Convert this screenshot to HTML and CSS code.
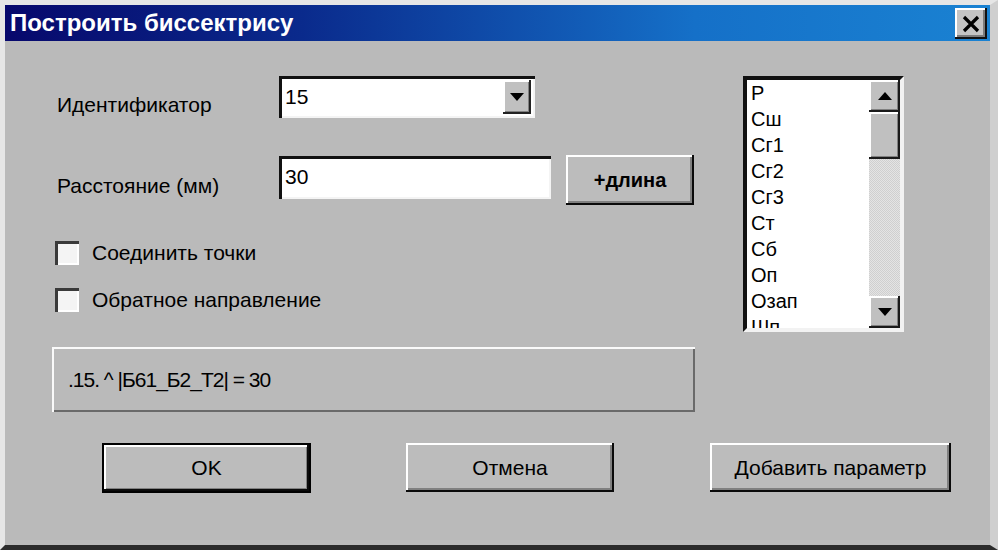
FILE: index.html
```html
<!DOCTYPE html>
<html lang="ru">
<head>
  <meta charset="UTF-8">
  <title>Построить биссектрису</title>
  <link rel="stylesheet" href="styles.css">
</head>
<body>

  <div class="window">
    <div class="titlebar">
      <span class="title">Построить биссектрису</span>
      <div class="close">
        <svg width="20" height="18" viewBox="0 0 20 18"><path d="M3 2 L17 16 M17 2 L3 16" stroke="#000" stroke-width="3.2"/></svg>
      </div>
    </div>

    <div class="client">
      <div class="top">
        <div class="form">
          <div class="row row-id">
            <span class="lbl">Идентификатор</span>
            <div class="combo">
              <span class="combo-text">15</span>
              <div class="drop">
                <svg width="14" height="8" viewBox="0 0 14 8"><path d="M0 0 H14 L7 8 Z" fill="#000"/></svg>
              </div>
            </div>
          </div>

          <div class="row row-dist">
            <span class="lbl">Расстояние (мм)</span>
            <div class="field">30</div>
            <div class="btn btn-len">+длина</div>
          </div>

          <div class="check check-first"><span class="box"></span>Соединить точки</div>
          <div class="check"><span class="box"></span>Обратное направление</div>

          <div class="status">.15. ^ |Б61_Б2_Т2| = 30</div>
        </div>

        <div class="listbox">
          <ul class="items">
            <li>Р</li>
            <li>Сш</li>
            <li>Сг1</li>
            <li>Сг2</li>
            <li>Сг3</li>
            <li>Ст</li>
            <li>Сб</li>
            <li>Оп</li>
            <li>Озап</li>
            <li>Шп</li>
          </ul>
          <div class="scroll">
            <div class="sb-btn">
              <svg width="14" height="8" viewBox="0 0 14 8"><path d="M0 8 H14 L7 0 Z" fill="#000"/></svg>
            </div>
            <div class="thumb"></div>
            <div class="track"></div>
            <div class="sb-btn">
              <svg width="14" height="8" viewBox="0 0 14 8"><path d="M0 0 H14 L7 8 Z" fill="#000"/></svg>
            </div>
          </div>
        </div>
      </div>

      <div class="buttons">
        <div class="btn btn-ok">OK</div>
        <div class="btn btn-cancel">Отмена</div>
        <div class="btn btn-add">Добавить параметр</div>
      </div>
    </div>
  </div>

</body>
</html>
```

FILE: styles.css
```css
body {
  margin: 0;
  padding: 0;
  background: #bababa;
  font-family: "Liberation Sans", Arial, sans-serif;
  color: #000;
}

.window {
  width: 998px;
  height: 550px;
  box-sizing: border-box;
  border-top: 5px solid #e6e6e6;
  border-left: 5px solid #e6e6e6;
  border-right: 8px solid #cfcfcf;
  border-bottom: 5px solid #2b2b2b;
  background: #bababa;
  display: flex;
  flex-direction: column;
}

.titlebar {
  height: 36px;
  display: flex;
  align-items: flex-start;
  justify-content: space-between;
  background: linear-gradient(to right, #07086c, #0a2a8c 30%, #1570c8 70%, #1a82d2);
}

.title {
  color: #fff;
  font-weight: bold;
  font-size: 24px;
  line-height: 36px;
  padding-left: 5px;
}

.close {
  width: 32px;
  height: 31px;
  margin: 3px 3px 0 0;
  box-sizing: border-box;
  background: #c4c4c4;
  box-shadow: inset -2px -2px #111, inset 2px 2px #fff, inset -4px -4px #7c7c7c;
  display: flex;
  align-items: center;
  justify-content: center;
}

.client {
  flex: 1;
  padding: 35px 0 0 47px;
  font-size: 21px;
}

.top {
  display: flex;
  gap: 48px;
}

.form {
  width: 643px;
}

.row {
  display: flex;
  align-items: flex-start;
}

.lbl {
  width: 222px;
  padding-left: 5px;
  line-height: 24px;
}

.row-id .lbl {
  padding-top: 17px;
}

.combo {
  width: 256px;
  height: 42px;
  box-sizing: border-box;
  background: #fff;
  box-shadow: inset 3px 3px #111, inset -2px -2px #f4f4f4;
  display: flex;
  align-items: center;
  justify-content: space-between;
  padding: 4px 4px 4px 6px;
}

.combo-text {
  line-height: 34px;
}

.drop {
  width: 28px;
  height: 34px;
  box-sizing: border-box;
  background: #c0c0c0;
  box-shadow: inset -2px -2px #222, inset 2px 2px #fff, inset -3px -3px #808080;
  display: flex;
  align-items: center;
  justify-content: center;
}

.row-dist {
  margin-top: 37px;
}

.row-dist .lbl {
  padding-top: 19px;
}

.field {
  width: 272px;
  height: 43px;
  margin-top: 1px;
  box-sizing: border-box;
  background: #fff;
  box-shadow: inset 3px 3px #111, inset -2px -2px #f4f4f4;
  padding: 4px 6px;
  line-height: 34px;
}

.btn {
  box-sizing: border-box;
  background: #bcbcbc;
  box-shadow: inset -2px -2px #0a0a0a, inset 2px 2px #fff, inset -4px -4px #808080;
  display: flex;
  align-items: center;
  justify-content: center;
  height: 49px;
}

.btn-len {
  width: 128px;
  height: 50px;
  margin-left: 15px;
  font-weight: bold;
  font-size: 20px;
}

.check {
  display: flex;
  align-items: center;
  height: 24px;
  margin-top: 23px;
  margin-left: 3px;
}

.check-first {
  margin-top: 36px;
}

.box {
  width: 24px;
  height: 24px;
  box-sizing: border-box;
  background: #f4f4f4;
  box-shadow: inset 3px 3px #3a3a3a, inset -2px -2px #fff;
  margin-right: 13px;
}

.status {
  margin-top: 35px;
  height: 65px;
  box-sizing: border-box;
  box-shadow: inset 2px 2px #fafafa, inset -2px -2px #6a6a6a;
  padding-left: 16px;
  display: flex;
  align-items: center;
  letter-spacing: -1px;
}

.listbox {
  width: 161px;
  height: 256px;
  box-sizing: border-box;
  background: #fff;
  border-top: 4px solid #111;
  border-left: 4px solid #111;
  border-right: 4px solid #f2f2f2;
  border-bottom: 4px solid #f2f2f2;
  display: flex;
  overflow: hidden;
}

.items {
  list-style: none;
  margin: 0;
  padding: 0 0 0 4px;
  flex: 1;
  font-size: 20px;
  line-height: 26px;
  overflow: hidden;
}

.scroll {
  width: 31px;
  display: flex;
  flex-direction: column;
}

.sb-btn {
  height: 32px;
  box-sizing: border-box;
  background: #c0c0c0;
  box-shadow: inset -2px -2px #1a1a1a, inset 2px 2px #fff, inset -3px -3px #808080;
  display: flex;
  align-items: center;
  justify-content: center;
}

.thumb {
  height: 47px;
  box-sizing: border-box;
  background: #c0c0c0;
  box-shadow: inset -2px -2px #1a1a1a, inset 2px 2px #fff, inset -3px -3px #808080;
}

.track {
  flex: 1;
  background: repeating-conic-gradient(#e4e4e4 0 25%, #cfcfcf 0 50%) 0 0 / 2px 2px;
}

.buttons {
  display: flex;
  margin-top: 31px;
  padding-left: 50px;
}

.btn-ok {
  width: 209px;
  height: 50px;
  border: 2px solid #000;
  box-shadow: inset -2px -2px #0a0a0a, inset 2px 2px #fff, inset -3px -3px #808080;
}

.btn-cancel {
  width: 208px;
  margin-left: 95px;
}

.btn-add {
  width: 241px;
  margin-left: 96px;
}
```
